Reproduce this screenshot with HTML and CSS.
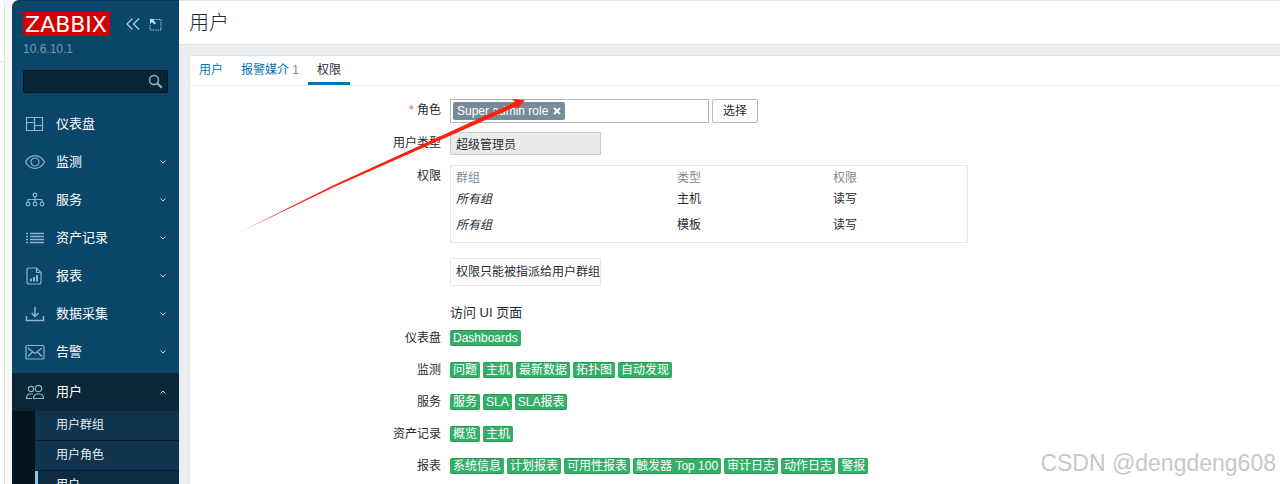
FILE: index.html
```html
<!DOCTYPE html>
<html lang="zh-CN">
<head>
  <meta charset="UTF-8">
  <meta name="viewport" content="width=device-width, initial-scale=1.0">
  <title>用户</title>
  <link rel="stylesheet" href="styles.css">
</head>
<body>
  <div class="edge"><div class="edge-tab"></div></div>

  <aside class="sidebar">
    <div class="sidebar-header">
      <a href="#" class="logo">
        <svg width="87" height="24" viewBox="0 0 87 24" role="img" aria-label="ZABBIX">
          <rect width="87" height="24" fill="#d40000"/>
          <text x="43" y="20" text-anchor="middle" class="logo-text">ZABBIX</text>
        </svg>
      </a>
      <button type="button" class="icon-btn" aria-label="收起">
        <svg width="14" height="12" viewBox="0 0 14 12"><path d="M6.500 .5 1 6l5.500 5.500M13 .5 7.500 6 13 11.500" fill="none" stroke="#a9c6d8" stroke-width="1.400"/></svg>
      </button>
      <button type="button" class="icon-btn" aria-label="隐藏">
        <svg width="13" height="13" viewBox="0 0 13 13"><path d="M7 1.500h5v10.500H1V7" fill="none" stroke="#b9d1df" stroke-dasharray="1.500 1"/><path d="M1 1h5L4.500 2.500 7 5 5.500 6.500 3 4 1 6z" fill="#c9dde8"/></svg>
      </button>
    </div>
    <div class="server-name">10.6.10.1</div>

    <form class="search" role="search">
      <input type="text" class="search-input" aria-label="搜索">
      <button type="submit" class="search-btn" aria-label="搜索">
        <svg width="15" height="15" viewBox="0 0 15 15" fill="none" stroke="#91b1c3"><circle cx="6" cy="6" r="4.500" stroke-width="1.500"/><path d="m9.300 9.300 4.500 4.500" stroke-width="2"/></svg>
      </button>
    </form>

    <nav>
      <ul class="menu">
        <li><a href="#" class="menu-item">
          <svg class="menu-icon" viewBox="0 0 20 20"><path d="M1.500 3.500h16v13h-16zM9.500 3.500v13M1.500 8.500h8M9.500 11.500h8"/></svg>
          <span>仪表盘</span></a></li>
        <li><a href="#" class="menu-item">
          <svg class="menu-icon" viewBox="0 0 20 20"><path d="M.5 10C5 1.500 15 1.500 19.500 10 15 18.500 5 18.500.5 10z"/><circle cx="10" cy="10" r="4"/></svg>
          <span>监测</span><svg class="arrow" viewBox="0 0 6 4"><path d="m.5.500 2.500 2.500L5.500.5"/></svg></a></li>
        <li><a href="#" class="menu-item">
          <svg class="menu-icon" viewBox="0 0 20 20"><circle cx="10" cy="5" r="1.800"/><circle cx="3" cy="14" r="1.800"/><circle cx="10" cy="14" r="1.800"/><circle cx="17" cy="14" r="1.800"/><path d="M10 7v5M3 12V9.500h14V12"/></svg>
          <span>服务</span><svg class="arrow" viewBox="0 0 6 4"><path d="m.5.500 2.500 2.500L5.500.5"/></svg></a></li>
        <li><a href="#" class="menu-item">
          <svg class="menu-icon" viewBox="0 0 20 20"><path d="M1 5.500h2M5 5.500h14M1 8.500h2M5 8.500h14M1 11.500h2M5 11.500h14M1 14.500h2M5 14.500h14" stroke-width="1.400"/></svg>
          <span>资产记录</span><svg class="arrow" viewBox="0 0 6 4"><path d="m.5.500 2.500 2.500L5.500.5"/></svg></a></li>
        <li><a href="#" class="menu-item">
          <svg class="menu-icon" viewBox="0 0 20 20"><path d="M5 2h6.500L16 6.500V16q0 2-2 2H4q-2 0-2-2V4q0-2 2-2zM11.500 2v4.500H16"/><path d="M6 15.500v-3M9 15.500V11M12 15.500V9" stroke-width="2"/></svg>
          <span>报表</span><svg class="arrow" viewBox="0 0 6 4"><path d="m.5.500 2.500 2.500L5.500.5"/></svg></a></li>
        <li><a href="#" class="menu-item">
          <svg class="menu-icon" viewBox="0 0 20 20"><path d="M1.500 12v4.500h17V12M10 3v9M6.500 9l3.500 3.500L13.500 9" stroke-width="1.500"/></svg>
          <span>数据采集</span><svg class="arrow" viewBox="0 0 6 4"><path d="m.5.500 2.500 2.500L5.500.5"/></svg></a></li>
        <li><a href="#" class="menu-item">
          <svg class="menu-icon" viewBox="0 0 20 20"><rect x="1" y="3.500" width="18" height="13.500" rx="1"/><path d="m3 6 7 5.500L17 6M3 14.500l4.500-4.500M17 14.500 12.500 10"/></svg>
          <span>告警</span><svg class="arrow" viewBox="0 0 6 4"><path d="m.5.500 2.500 2.500L5.500.5"/></svg></a></li>
        <li class="expanded"><a href="#" class="menu-item">
          <svg class="menu-icon" viewBox="0 0 20 20"><circle cx="6" cy="7" r="2.700"/><circle cx="13.500" cy="6.500" r="3.200"/><path d="M8.500 16.500c0-3 1.500-4 3.200-4.500h3.600c2 .5 3.200 1.500 3.200 4.500zM7 16.500H1.500c0-3 1-4 2.500-4.500h4"/></svg>
          <span>用户</span><svg class="arrow" viewBox="0 0 6 4"><path d="m.5 3.500 2.500-2.500L5.500 3.500"/></svg></a>
          <ul class="submenu">
            <li><a href="#">用户群组</a></li>
            <li><a href="#">用户角色</a></li>
            <li class="selected"><a href="#">用户</a></li>
          </ul>
        </li>
      </ul>
    </nav>
  </aside>

  <main class="wrapper">
    <header class="page-title"><h1>用户</h1></header>

    <div class="panel">
      <nav class="tabs">
        <a href="#">用户</a>
        <a href="#">报警媒介 <span class="count">1</span></a>
        <a href="#" class="active">权限</a>
      </nav>

      <form class="form-grid">
        <label class="required" for="role">角色</label>
        <div class="role-field">
          <div class="multiselect">
            <span class="chip">Super admin role
              <button type="button" class="chip-remove" aria-label="删除"><svg width="8" height="8" viewBox="0 0 8 8"><path d="m1 1 6 6M7 1 1 7" stroke="#fff" stroke-width="2"/></svg></button>
            </span>
            <input type="text" id="role">
          </div>
          <button type="button" class="btn-alt">选择</button>
        </div>

        <label for="user-type">用户类型</label>
        <input type="text" id="user-type" class="user-type" value="超级管理员" readonly>

        <div class="label">权限</div>
        <div class="table-box">
          <table>
            <thead><tr><th class="col-group">群组</th><th class="col-type">类型</th><th>权限</th></tr></thead>
            <tbody>
              <tr><td><em>所有组</em></td><td>主机</td><td>读写</td></tr>
              <tr><td><em>所有组</em></td><td>模板</td><td>读写</td></tr>
            </tbody>
          </table>
        </div>

        <div class="note">权限只能被指派给用户群组</div>

        <h4>访问 UI 页面</h4>

        <div class="label">仪表盘</div>
        <div class="tags"><span>Dashboards</span></div>

        <div class="label">监测</div>
        <div class="tags"><span>问题</span><span>主机</span><span>最新数据</span><span>拓扑图</span><span>自动发现</span></div>

        <div class="label">服务</div>
        <div class="tags"><span>服务</span><span>SLA</span><span>SLA报表</span></div>

        <div class="label">资产记录</div>
        <div class="tags"><span>概览</span><span>主机</span></div>

        <div class="label">报表</div>
        <div class="tags"><span>系统信息</span><span>计划报表</span><span>可用性报表</span><span>触发器 Top 100</span><span>审计日志</span><span>动作日志</span><span>警报</span></div>
      </form>
    </div>
  </main>

  <svg class="pointer" width="292" height="138" viewBox="0 0 292 138" aria-hidden="true">
    <defs>
      <linearGradient id="fade" x1="0" x2="1" y1="0" y2="0">
        <stop offset="0" stop-color="#ff2010" stop-opacity="0.400"/>
        <stop offset="0.200" stop-color="#ff2010"/>
      </linearGradient>
    </defs>
    <path d="M0 137 100 87 281 4 278 1 291 2 283 11 282 8.500 100 89 Z" fill="url(#fade)"/>
  </svg>
  <div class="watermark">CSDN @dengdeng608</div>
</body>
</html>
```

FILE: styles.css
```css
* {
  box-sizing: border-box;
}

body {
  margin: 0;
  height: 100vh;
  display: flex;
  overflow: hidden;
  position: relative;
  background: #f7f7f7;
  color: #1f2c33;
  font: 12px/16px "Liberation Sans", "Noto Sans CJK SC", sans-serif;
}

a {
  text-decoration: none;
}

ul {
  list-style: none;
  margin: 0;
  padding: 0;
}

button, input {
  font: inherit;
  color: inherit;
}

.edge {
  flex: none;
  width: 12px;
}

.edge-tab {
  width: 5px;
  height: 100%;
  background: linear-gradient(#e0e0e0, #e0e0e0) 0 61px / 100% 1px no-repeat #fff;
  border-right: 1px solid #e2e2e2;
  border-top-right-radius: 4px;
}

/* sidebar */

.sidebar {
  flex: none;
  width: 167px;
  height: 100%;
  overflow: hidden;
  background: #0a466a;
  border-top: 1px solid #083a58;
  border-top-left-radius: 7px;
}

.sidebar-header {
  display: flex;
  align-items: center;
  gap: 9px;
  padding: 11px 11px 0;
}

.logo {
  display: flex;
  margin-right: 7px;
}

.logo-text {
  fill: #fff;
  font: 22px "DejaVu Sans", sans-serif;
}

.icon-btn {
  display: flex;
  padding: 0;
  border: 0;
  background: none;
  cursor: pointer;
}

.server-name {
  padding: 5px 11px 0;
  color: #7897aa;
}

.search {
  display: flex;
  margin: 13px 11px 12px;
  height: 23px;
  background: #0a2535;
  border: 1px solid #04141e;
  border-radius: 2px;
}

.search-input {
  flex: 1;
  min-width: 0;
  padding: 0 5px;
  border: 0;
  background: none;
  color: #fff;
}

.search-btn {
  display: flex;
  align-items: center;
  padding: 0 4px;
  border: 0;
  background: none;
}

.menu-item {
  display: flex;
  align-items: center;
  height: 38px;
  padding: 0 13px;
  color: #fff;
  font-size: 13px;
}

.menu-icon {
  width: 20px;
  height: 20px;
  margin-right: 11px;
  fill: none;
  stroke: #8cb4ca;
  stroke-width: 1.2;
}

.arrow {
  width: 6px;
  height: 4px;
  margin-left: auto;
  fill: none;
  stroke: #c4dae6;
}

.expanded {
  margin-top: 2px;
  background: #04131c;
}

.expanded .menu-item {
  background: #0a2737;
}

.submenu {
  margin-left: 23px;
  background: #10344d;
}

.submenu a {
  display: block;
  padding: 6px 21px 7px;
  border-bottom: 1px solid #061a27;
  color: #e3ecf1;
}

.submenu .selected a {
  padding-left: 18px;
  border-left: 3px solid #7bccf5;
  background: #0c2b40;
  color: #fff;
}

/* page */

.wrapper {
  flex: 1;
  min-width: 0;
  display: flex;
  flex-direction: column;
  background: #ebeef0;
  border-top: 1px solid #dfe4e7;
}

.page-title {
  padding: 10px 10px 9px;
  background: #fff;
  border-bottom: 1px solid #dfe4e7;
}

h1 {
  margin: 0;
  font-size: 20px;
  line-height: 24px;
  font-weight: 300;
}

.panel {
  flex: 1;
  margin: 10px 0 0 10px;
  background: #fff;
  border: 1px solid #dfe4e7;
  border-width: 1px 0 0 1px;
}

.tabs {
  display: flex;
  border-bottom: 1px solid #ebeef0;
}

.tabs a {
  padding: 6px 9px 4px;
  border-bottom: 3px solid transparent;
  color: #0275b8;
}

.tabs .active {
  border-color: #0275b8;
  color: #1f2c33;
}

.count {
  color: #768d99;
}

.form-grid {
  display: grid;
  grid-template-columns: 251px minmax(0, 1fr);
  column-gap: 9px;
  align-items: start;
  padding-top: 13px;
}

.form-grid > label, .label {
  padding-top: 3px;
  text-align: right;
}

.required::before {
  content: "* ";
  color: #e45959;
}

.role-field {
  display: flex;
  gap: 3px;
  margin-bottom: 9px;
}

.multiselect {
  display: flex;
  width: 259px;
  height: 24px;
  padding: 2px;
  border: 1px solid #acbbc2;
}

.multiselect input {
  flex: 1;
  min-width: 0;
  border: 0;
  padding: 0 4px;
}

.chip {
  display: flex;
  align-items: center;
  gap: 5px;
  padding: 0 4px;
  background: #768d99;
  border-radius: 2px;
  color: #fff;
}

.chip-remove {
  display: flex;
  padding: 0;
  border: 0;
  background: none;
}

.btn-alt {
  padding: 0 10px;
  background: #fff;
  border: 1px solid #acbbc2;
  border-radius: 2px;
}

.user-type {
  width: 151px;
  height: 23px;
  margin-bottom: 10px;
  padding: 0 5px;
  background: #ebebeb;
  border: 1px solid #c5ced3;
}

.table-box {
  width: 518px;
  max-width: 100%;
  padding: 3px 5px 4px;
  border: 1px solid #e6eaec;
}

table {
  width: 100%;
  border-collapse: collapse;
}

th {
  padding: 0;
  height: 17px;
  color: #768d99;
  font-weight: normal;
  text-align: left;
}

td {
  padding: 0;
  height: 26px;
}

.col-group {
  width: 221px;
}

.col-type {
  width: 156px;
}

.note, h4 {
  grid-column: 2;
}

.note {
  justify-self: start;
  margin-top: 15px;
  padding: 5px 0 5px 5px;
  border: 1px solid #e6eaec;
}

h4 {
  margin: 18px 0 8px;
  font-size: 13px;
  line-height: 18px;
  font-weight: normal;
}

h4 ~ .label {
  padding-top: 0;
}

.tags {
  display: flex;
  flex-wrap: wrap;
  gap: 3px;
  margin-bottom: 16px;
}

.tags span {
  padding: 0 3px;
  line-height: 14px;
  background: #34af67;
  border: 1px solid #269a55;
  border-width: 1px 0;
  border-radius: 2px;
  color: #fff;
}

.tags:last-child {
  margin-bottom: 0;
}

/* overlays */

.pointer {
  position: absolute;
  left: 234px;
  top: 98px;
  pointer-events: none;
}

.watermark {
  position: absolute;
  right: 4px;
  bottom: 7px;
  color: #c8c8c8;
  font-size: 23px;
  line-height: 28px;
  text-shadow: 1px 1px 1px #fff;
}
```
